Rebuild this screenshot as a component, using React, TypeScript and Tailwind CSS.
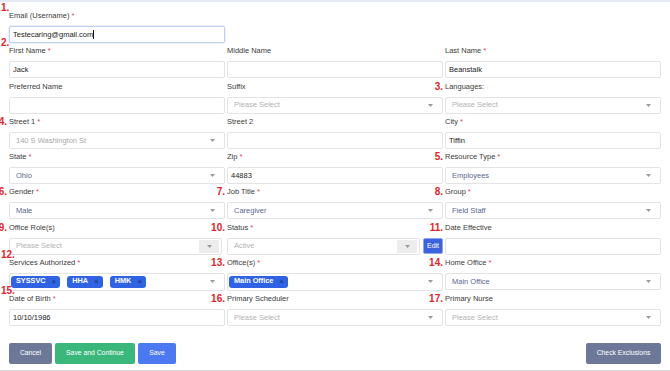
import React from 'react';

type Tone = 'value' | 'placeholder' | 'muted';

const toneClass: Record<Tone, string> = {
  value: 'text-[#5b6890]',
  placeholder: 'text-[#b3b3b3]',
  muted: 'text-[#a9a9a9]',
};

function Marker({ n, above }: { n: string; above?: boolean }) {
  return above ? (
    <span className="absolute left-[-8px] top-[-8px] text-[10px] leading-[10px] font-bold text-[#e0262a]">{n}</span>
  ) : (
    <span className="absolute right-full top-0 mr-[2px] text-[10px] leading-[10px] font-bold text-[#e0262a]">{n}</span>
  );
}

function Field({
  label,
  required,
  marker,
  above,
  children,
}: {
  label: string;
  required?: boolean;
  marker?: string;
  above?: boolean;
  children: React.ReactNode;
}) {
  return (
    <div className="relative">
      {marker && <Marker n={marker} above={above} />}
      <label className="block h-[10px] leading-[10px] text-[7.5px] text-[#3b3b3b] mb-[5px]">
        {label}
        {required && <span className="text-[#e04a4a] ml-[2px]">*</span>}
      </label>
      {children}
    </div>
  );
}

function TextInput({ value = '' }: { value?: string }) {
  return (
    <input
      readOnly
      value={value}
      className="block w-full h-[17px] px-[3px] text-[7.5px] text-[#222] bg-white border border-[#e3e3e3] rounded-[2px] outline-none"
    />
  );
}

function Caret() {
  return (
    <svg width="5" height="3" viewBox="0 0 5 3" className="shrink-0">
      <path d="M0 0h5L2.5 3z" fill="#9a9a9a" />
    </svg>
  );
}

function Select({ value, tone = 'value', disabled }: { value: string; tone?: Tone; disabled?: boolean }) {
  return (
    <div className="flex items-center h-[17px] pl-[6px] bg-white border border-[#e3e3e3] rounded-[2px] text-[7.5px]">
      <span className={`flex-1 truncate ${toneClass[tone]}`}>{value}</span>
      {disabled ? (
        <div className="flex items-center justify-center w-[20px] h-[13px] mr-[2px] bg-[#ededed]">
          <Caret />
        </div>
      ) : (
        <div className="mr-[9px]">
          <Caret />
        </div>
      )}
    </div>
  );
}

function Tag({ text }: { text: string }) {
  return (
    <span className="flex items-center gap-[6px] h-[12px] pl-[5px] pr-[4px] rounded-[3px] bg-[#2f63e3] text-white text-[7.3px]">
      <span className="font-bold">{text}</span>
      <span className="text-[#1f2d55] text-[8px] leading-none">×</span>
    </span>
  );
}

function MultiSelect({ tags }: { tags: string[] }) {
  return (
    <div className="flex items-center h-[18px] pl-[1px] bg-white border border-[#e3e3e3] rounded-[2px]">
      <div className="flex flex-1 items-center gap-[7px]">
        {tags.map((t) => (
          <Tag key={t} text={t} />
        ))}
      </div>
      <div className="mr-[9px]">
        <Caret />
      </div>
    </div>
  );
}

export default function App() {
  return (
    <div
      className="w-[670px] h-[371px] bg-white border-t-2 border-[#e4e8f7] border-b border-b-[#dcdcdc] pt-[9px] px-[9px] overflow-hidden"
      style={{ fontFamily: '"Liberation Sans", Arial, sans-serif' }}
    >
      <div className="w-[216px] mb-[3.25px]">
        <Field label="Email (Username)" required marker="1." above>
          <div className="flex items-center h-[17px] px-[3px] border border-[#c3cdf2] rounded-[2px] shadow-[0_0_0_1px_#eef1fc] text-[7.5px] text-[#222]">
            Testecaring@gmail.com
            <span className="w-px h-[9px] bg-[#111]" />
          </div>
        </Field>
      </div>

      <div className="grid grid-cols-3 gap-x-[2px] gap-y-[3.25px]">
        <Field label="First Name" required marker="2." above>
          <TextInput value="Jack" />
        </Field>
        <Field label="Middle Name">
          <TextInput />
        </Field>
        <Field label="Last Name" required>
          <TextInput value="Beanstalk" />
        </Field>

        <Field label="Preferred Name">
          <TextInput />
        </Field>
        <Field label="Suffix">
          <Select value="Please Select" tone="placeholder" />
        </Field>
        <Field label="Languages:" marker="3.">
          <Select value="Please Select" tone="placeholder" />
        </Field>

        <Field label="Street 1" required marker="4.">
          <Select value="140 S Washington St" tone="muted" />
        </Field>
        <Field label="Street 2">
          <TextInput />
        </Field>
        <Field label="City" required>
          <TextInput value="Tiffin" />
        </Field>

        <Field label="State" required>
          <Select value="Ohio" />
        </Field>
        <Field label="Zip" required>
          <TextInput value="44883" />
        </Field>
        <Field label="Resource Type" required marker="5.">
          <Select value="Employees" />
        </Field>

        <Field label="Gender" required marker="6.">
          <Select value="Male" />
        </Field>
        <Field label="Job Title" required marker="7.">
          <Select value="Caregiver" />
        </Field>
        <Field label="Group" required marker="8.">
          <Select value="Field Staff" />
        </Field>

        <Field label="Office Role(s)" marker="9.">
          <div className="mr-[3px]">
            <Select value="Please Select" tone="placeholder" disabled />
          </div>
        </Field>
        <Field label="Status" required marker="10.">
          <div className="flex items-center gap-[3px]">
            <div className="flex-1">
              <Select value="Active" tone="placeholder" disabled />
            </div>
            <button className="w-[20px] h-[16px] rounded-[2px] bg-[#3d63dc] border border-[#8fa6ee] text-white text-[7px]">
              Edit
            </button>
          </div>
        </Field>
        <Field label="Date Effective" marker="11.">
          <TextInput />
        </Field>

        <Field label="Services Authorized" required marker="12." above>
          <MultiSelect tags={['SYSSVC', 'HHA', 'HMK']} />
        </Field>
        <Field label="Office(s)" required marker="13.">
          <MultiSelect tags={['Main Office']} />
        </Field>
        <Field label="Home Office" required marker="14.">
          <Select value="Main Office" />
        </Field>

        <Field label="Date of Birth" required marker="15." above>
          <TextInput value="10/10/1986" />
        </Field>
        <Field label="Primary Scheduler" marker="16.">
          <Select value="Please Select" tone="placeholder" />
        </Field>
        <Field label="Primary Nurse" marker="17.">
          <Select value="Please Select" tone="placeholder" />
        </Field>
      </div>

      <div className="flex items-center mt-[17px]">
        <div className="flex gap-[3px]">
          <button className="h-[21px] w-[43px] rounded-[2px] bg-[#6d7898] text-white text-[6.8px]">Cancel</button>
          <button className="h-[21px] w-[80px] rounded-[2px] bg-[#3cb77b] text-white text-[6.8px]">Save and Continue</button>
          <button className="h-[21px] w-[38px] rounded-[2px] bg-[#4c79f2] text-white text-[6.8px]">Save</button>
        </div>
        <button className="ml-auto h-[21px] w-[75px] rounded-[2px] bg-[#6d7898] text-white text-[6.8px]">
          Check Exclusions
        </button>
      </div>
    </div>
  );
}
